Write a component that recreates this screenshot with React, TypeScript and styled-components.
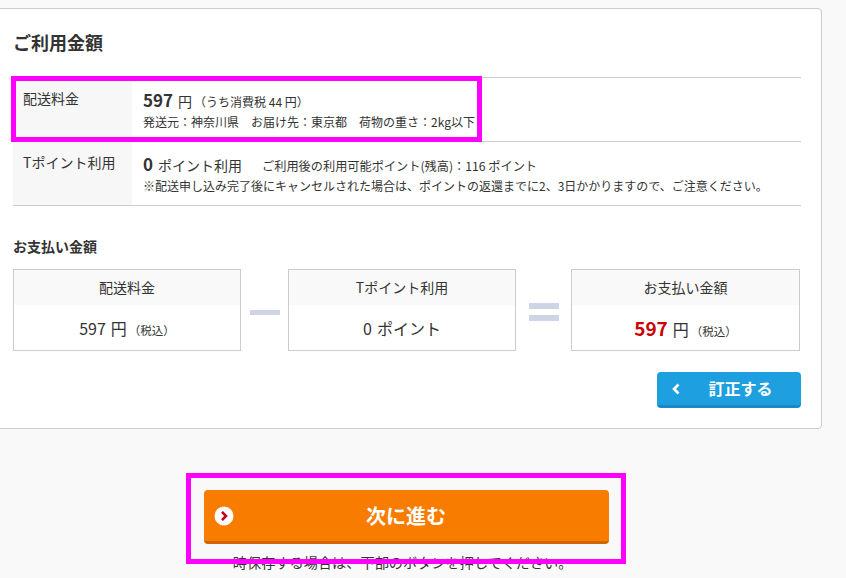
import React from "react"
import styled, { createGlobalStyle } from "styled-components"

const GlobalStyle = createGlobalStyle`
  html, body {
    margin: 0;
    padding: 0;
    background: #f9f9f9;
    overflow: hidden;
  }
  body {
    font-family: "Noto Sans CJK JP", "Noto Sans", sans-serif;
    color: #333;
  }
`

const Page = styled.div`
  width: 832px;
  margin-left: -10px;
  padding-top: 8px;
`

const Card = styled.section`
  background: #fff;
  border: 1px solid #ccc;
  border-radius: 0 4px 4px 0;
  padding: 20px 20px 20px 22px;
`

const Title = styled.h2`
  margin: 0 0 22px;
  font-size: 18px;
  line-height: 26px;
  font-weight: 700;
`

const Table = styled.div`
  border-top: 1px solid #ccc;
`

const Row = styled.div`
  position: relative;
  display: grid;
  grid-template-columns: 119px 1fr;
  border-bottom: 1px solid #ccc;
`

const Label = styled.div`
  background: #f7f7f7;
  padding: 10px 10px;
  font-size: 14px;
  line-height: 20px;
`

const Value = styled.div`
  padding: 10px 11px 9px;
`

const MainLine = styled.div`
  display: flex;
  align-items: baseline;
  height: 24px;
  line-height: 24px;
  font-size: 14px;
  white-space: nowrap;
`

const Big = styled.span`
  font-size: 17px;
  font-weight: 700;
  margin-right: 5px;
`

const Small = styled.span<{ $size?: number }>`
  font-size: ${(p) => p.$size ?? 12}px;
  margin-left: 2px;
`

const Note = styled.span`
  font-size: 12.2px;
  margin-left: 20px;
`

const SubLine = styled.div`
  font-size: 12px;
  line-height: 20px;
  white-space: nowrap;
`

const SectionTitle = styled.h3`
  margin: 30px 0 13px;
  font-size: 14px;
  line-height: 20px;
  font-weight: 700;
`

const Summary = styled.div`
  display: grid;
  grid-template-columns: 228px 47px 228px 55px 229px;
  align-items: center;
`

const Box = styled.div`
  border: 1px solid #ccc;
  height: 82px;
  box-sizing: border-box;
  display: grid;
  grid-template-rows: 35px 1fr;
  text-align: center;
`

const BoxHead = styled.div`
  background: #f9f9f9;
  font-size: 14px;
  line-height: 35px;
`

const BoxBody = styled.div`
  display: flex;
  justify-content: center;
  align-items: baseline;
  padding-top: 11px;
  font-size: 16px;
  line-height: 24px;
`

const BoxNum = styled.span<{ $red?: boolean }>`
  font-size: ${(p) => (p.$red ? "19px" : "16px")};
  font-weight: ${(p) => (p.$red ? 700 : 400)};
  color: ${(p) => (p.$red ? "#cc0000" : "#333")};
  margin-right: 5px;
`

const Operator = styled.div`
  display: flex;
  flex-direction: column;
  align-items: center;
  gap: 6px;
  padding-top: 4px;
`

const Bar = styled.span<{ $h: number }>`
  display: block;
  width: 30px;
  height: ${(p) => p.$h}px;
  background: #cfd3e6;
`

const Actions = styled.div`
  display: flex;
  justify-content: flex-end;
  margin-top: 21px;
`

const BackButton = styled.button`
  display: flex;
  align-items: center;
  width: 144px;
  height: 36px;
  padding: 0 0 0 15px;
  border: 0;
  border-bottom: 3px solid #1a8ac4;
  border-radius: 4px;
  background: #1ea0e0;
  color: #fff;
  font-family: inherit;
  font-size: 16px;
  font-weight: 700;
  box-sizing: border-box;
  span {
    flex: 1;
    text-align: center;
    line-height: 33px;
  }
`

const Bottom = styled.div`
  display: flex;
  flex-direction: column;
  align-items: center;
  margin-top: 61px;
`

const NextWrap = styled.div`
  position: relative;
`

const NextButton = styled.button`
  display: grid;
  grid-template-columns: 1fr auto 1fr;
  align-items: center;
  width: 405px;
  height: 54px;
  padding: 0 10px;
  border: 0;
  border-bottom: 3px solid #cf6600;
  border-radius: 4px;
  background: #f77c00;
  color: #fff;
  font-family: inherit;
  font-size: 20px;
  font-weight: 700;
  box-sizing: border-box;
  span {
    line-height: 51px;
  }
  svg {
    justify-self: start;
  }
`

const Hint = styled.p`
  margin: 8px 0 0 -21px;
  font-size: 14.2px;
  line-height: 20px;
  white-space: nowrap;
`

const Marker = styled.div<{ $l: number; $t: number; $w: number; $h: number }>`
  position: absolute;
  left: ${(p) => p.$l}px;
  top: ${(p) => p.$t}px;
  width: ${(p) => p.$w}px;
  height: ${(p) => p.$h}px;
  border: 5px solid #ff00ff;
  box-sizing: border-box;
  pointer-events: none;
  z-index: 2;
`

const ChevronLeft = () => (
  <svg width="8" height="12" viewBox="0 0 8 12">
    <polyline points="6.5,1.5 2,6 6.5,10.5" fill="none" stroke="#fff" strokeWidth="2.6" />
  </svg>
)

const NextIcon = () => (
  <svg width="20" height="20" viewBox="0 0 20 20">
    <circle cx="10" cy="10" r="9.5" fill="#fff" />
    <polyline points="8,5.8 12,10 8,14.2" fill="none" stroke="#c4001a" strokeWidth="2.6" />
  </svg>
)

const App = () => {
  return (
    <>
      <GlobalStyle />
      <Page>
        <Card>
          <Title>ご利用金額</Title>
          <Table>
            <Row>
              <Marker $l={-2} $t={-2} $w={471} $h={66} />
              <Label>配送料金</Label>
              <Value>
                <MainLine>
                  <Big>597</Big>円<Small>（うち消費税 44 円）</Small>
                </MainLine>
                <SubLine>発送元：神奈川県　お届け先：東京都　荷物の重さ：2kg以下</SubLine>
              </Value>
            </Row>
            <Row>
              <Label>Tポイント利用</Label>
              <Value>
                <MainLine>
                  <Big>0</Big>ポイント利用
                  <Note>ご利用後の利用可能ポイント(残高)：116 ポイント</Note>
                </MainLine>
                <SubLine>
                  ※配送申し込み完了後にキャンセルされた場合は、ポイントの返還までに2、3日かかりますので、ご注意ください。
                </SubLine>
              </Value>
            </Row>
          </Table>

          <SectionTitle>お支払い金額</SectionTitle>
          <Summary>
            <Box>
              <BoxHead>配送料金</BoxHead>
              <BoxBody>
                <BoxNum>597</BoxNum>円<Small $size={11.5}>（税込）</Small>
              </BoxBody>
            </Box>
            <Operator>
              <Bar $h={5} />
            </Operator>
            <Box>
              <BoxHead>Tポイント利用</BoxHead>
              <BoxBody>
                <BoxNum>0</BoxNum>ポイント
              </BoxBody>
            </Box>
            <Operator>
              <Bar $h={6} />
              <Bar $h={6} />
            </Operator>
            <Box>
              <BoxHead>お支払い金額</BoxHead>
              <BoxBody>
                <BoxNum $red>597</BoxNum>円<Small $size={11.5}>（税込）</Small>
              </BoxBody>
            </Box>
          </Summary>

          <Actions>
            <BackButton type="button">
              <ChevronLeft />
              <span>訂正する</span>
            </BackButton>
          </Actions>
        </Card>

        <Bottom>
          <NextWrap>
            <Marker $l={-18} $t={-17} $w={440} $h={91} />
            <NextButton type="button">
              <NextIcon />
              <span>次に進む</span>
              <i />
            </NextButton>
          </NextWrap>
          <Hint>一時保存する場合は、下部のボタンを押してください。</Hint>
        </Bottom>
      </Page>
    </>
  )
}

export default App
